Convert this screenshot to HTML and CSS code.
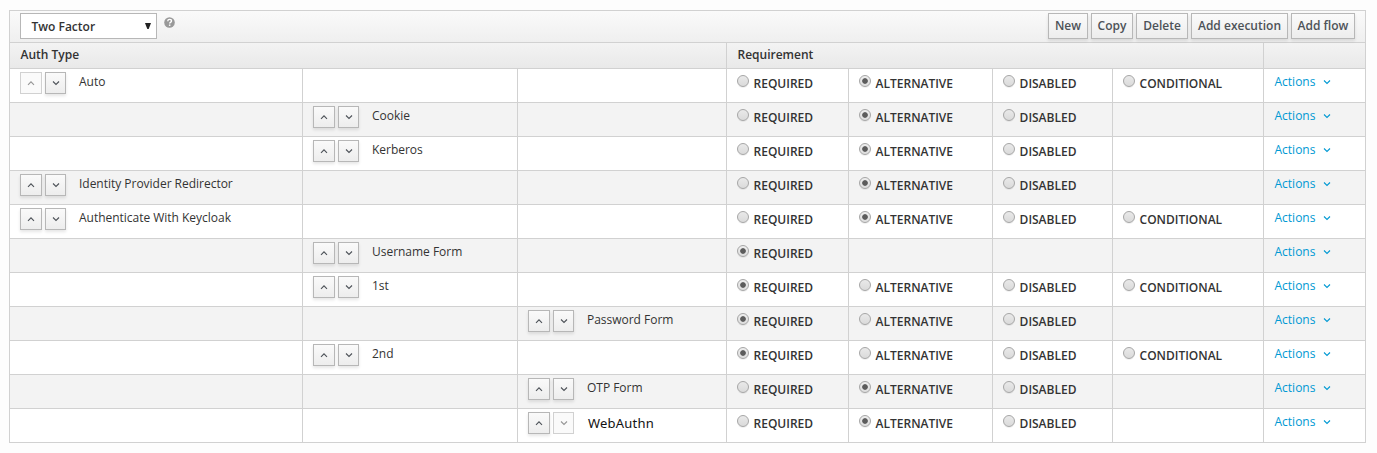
FILE: index.html
```
<!DOCTYPE html>
<html lang="en">
<head>
<meta charset="utf-8">
<title>Authentication flows</title>
<link rel="stylesheet" href="styles.css">
</head>
<body>
<svg class="defs" aria-hidden="true">
  <symbol id="up" viewBox="0 0 8 6"><path d="M1 4.8 4 1.8 7 4.8" fill="none" stroke="currentColor" stroke-width="1.1"/></symbol>
  <symbol id="down" viewBox="0 0 8 6"><path d="M1 1.5 4 4.5 7 1.5" fill="none" stroke="currentColor" stroke-width="1.1"/></symbol>
</svg>
<main class="flows">
  <div class="toolbar">
    <div class="select"><span>Two Factor</span><svg class="caret" viewBox="0 0 6 6"><path d="M0 0h6L3.7 6H2.3z" fill="#222"/></svg></div>
    <svg class="help" viewBox="0 0 11 11"><circle cx="5.5" cy="5.5" r="5.3" fill="#999"/><path d="M3.7 4.2C3.8 2.9 4.6 2.4 5.6 2.4c1.1 0 1.9.7 1.9 1.6 0 1.3-1.8 1.3-1.8 2.5" fill="none" stroke="#fff" stroke-width="1.4"/><path d="M4.9 7.5h1.5v1.4H4.9z" fill="#fff"/></svg>
    <div class="buttons">
      <button class="btn new">New</button>
      <button class="btn copy">Copy</button>
      <button class="btn delete">Delete</button>
      <button class="btn execution">Add execution</button>
      <button class="btn flow">Add flow</button>
    </div>
  </div>
  <div class="head"><div>Auth Type</div><div>Requirement</div><div></div></div>
  <div id="rows"></div>
</main>
<script src="rows.js"></script>
</body>
</html>
```
FILE: rows.js
```
// name, nesting level, selected requirement, available requirements, disabled arrow
const ALL = ['REQUIRED', 'ALTERNATIVE', 'DISABLED', 'CONDITIONAL'];
const flows = [
  ['Auto', 0, 1, 4, 'up'],
  ['Cookie', 1, 1, 3],
  ['Kerberos', 1, 1, 3],
  ['Identity Provider Redirector', 0, 1, 3],
  ['Authenticate With Keycloak', 0, 1, 4],
  ['Username Form', 1, 0, 1],
  ['1st', 1, 0, 4],
  ['Password Form', 2, 0, 3],
  ['2nd', 1, 0, 4],
  ['OTP Form', 2, 1, 3],
  ['WebAuthn', 2, 1, 3, 'down']
];
const icon = (id) => `<svg class="chevron" viewBox="0 0 8 6"><use href="#${id}"/></svg>`;
const arrow = (id, off) => `<button class="arrow ${id}" ${off === id ? 'disabled' : ''}>${icon(id)}</button>`;
document.getElementById('rows').innerHTML = flows.map(([name, level, selected, count, off]) => {
  let cells = '';
  for (let i = 0; i < 3; i++) {
    cells += i === level
      ? `<div class="cell step">${arrow('up', off)}${arrow('down', off)}<span class="name ${name.toLowerCase().replace(/ /g, '-')}">${name}</span></div>`
      : '<div class="cell"></div>';
  }
  ALL.forEach((label, i) => {
    cells += i < count
      ? `<div class="cell option"><span class="radio ${i === selected ? 'on' : ''}"></span><span class="label">${label}</span></div>`
      : '<div class="cell"></div>';
  });
  return `<div class="row">${cells}<div class="cell actions"><span>Actions</span>${icon('down')}</div></div>`;
}).join('');
```
FILE: styles.css
```
* { box-sizing: border-box; }
body { margin: 0; background: #fdfdfd; color: #333; font: 12px/20px "Open Sans", sans-serif; }
.defs { display: none; }
.flows { width: 1357px; margin: 10px 0 0 9px; border: 1px solid #d1d1d1; border-top: 0; background: #fff; }
.toolbar { display: flex; height: 32px; padding: 2px 10px 0; border-top: 1px solid #d1d1d1; background: linear-gradient(#fafafa, #efefef); }
.select { display: flex; justify-content: space-between; align-items: center; width: 137px; height: 26px; padding: 1px 5px 0 10.5px; border: 1px solid #b7b7b7; background: #fff; font-weight: 600; }
.select span { padding-top: 1px; }
.caret { width: 6px; height: 6px; margin-top: -2px; }
.help { width: 11px; height: 11px; margin: 4px 0 0 6.5px; }
.buttons { display: flex; gap: 3px; margin-left: auto; }
.btn { height: 26px; padding: 0; border: 1px solid #b7b7b7; background: linear-gradient(#fafafa, #ededed); box-shadow: 0 2px 3px rgba(3,3,3,.1); color: #4d5258; font: 600 12px/22px "Open Sans", sans-serif; white-space: nowrap; }
.new { width: 40px; }
.copy { width: 42px; }
.delete { width: 52px; }
.execution { width: 97px; }
.flow { width: 64px; }
.head { display: grid; grid-template-columns: 716px 537px 102px; height: 26px; border-top: 1px solid #d1d1d1; background: linear-gradient(#f3f3f3, #e9e9e9); font-weight: 600; line-height: 24px; }
.head div { padding-left: 10.5px; }
.head div + div { border-left: 1px solid #d1d1d1; }
.row { display: grid; grid-template-columns: 292px 215px 209px 122px 144px 120px 151px 102px; height: 34px; border-top: 1px solid #d1d1d1; }
.row:nth-child(even) { background: #f3f3f3; }
.cell { display: flex; align-items: flex-start; padding-left: 10px; }
.cell + .cell { border-left: 1px solid #d1d1d1; }
.arrow { display: flex; justify-content: center; align-items: center; height: 22px; margin-top: 3px; padding: 0; border: 1px solid #b7b7b7; background: linear-gradient(#fafafa, #ededed); box-shadow: 0 2px 3px rgba(3,3,3,.1); color: #4d5258; }
.arrow.up { width: 22px; }
.arrow.down { width: 21px; margin-left: 3px; }
.arrow:disabled { border-color: #d1d1d1; background: #fafafa; box-shadow: none; color: #969696; }
.chevron { width: 8px; height: 6px; }
.name { margin: 3px 0 0 13px; letter-spacing: -.02px; }
.webauthn { margin: 4px 0 0 14px; color: #111; font: 13px/20px "Noto Sans", sans-serif; letter-spacing: .2px; }
.radio { width: 12px; height: 12px; margin-top: 6px; border: 1px solid #a6a6a6; border-radius: 50%; background: linear-gradient(#e9e9e9, #dadada); box-shadow: 0 1px 0 rgba(0,0,0,.06); }
.radio.on { background: radial-gradient(circle, #5c5c5c 2.4px, transparent 3.2px), linear-gradient(#eee, #ddd); }
.label { margin: 5px 0 0 4.6px; font-weight: 600; letter-spacing: -.01px; }
.actions { padding-left: 10.5px; color: #0099d3; }
.actions span { margin-top: 3px; }
.actions .chevron { margin: 10px 0 0 7.5px; }
```
